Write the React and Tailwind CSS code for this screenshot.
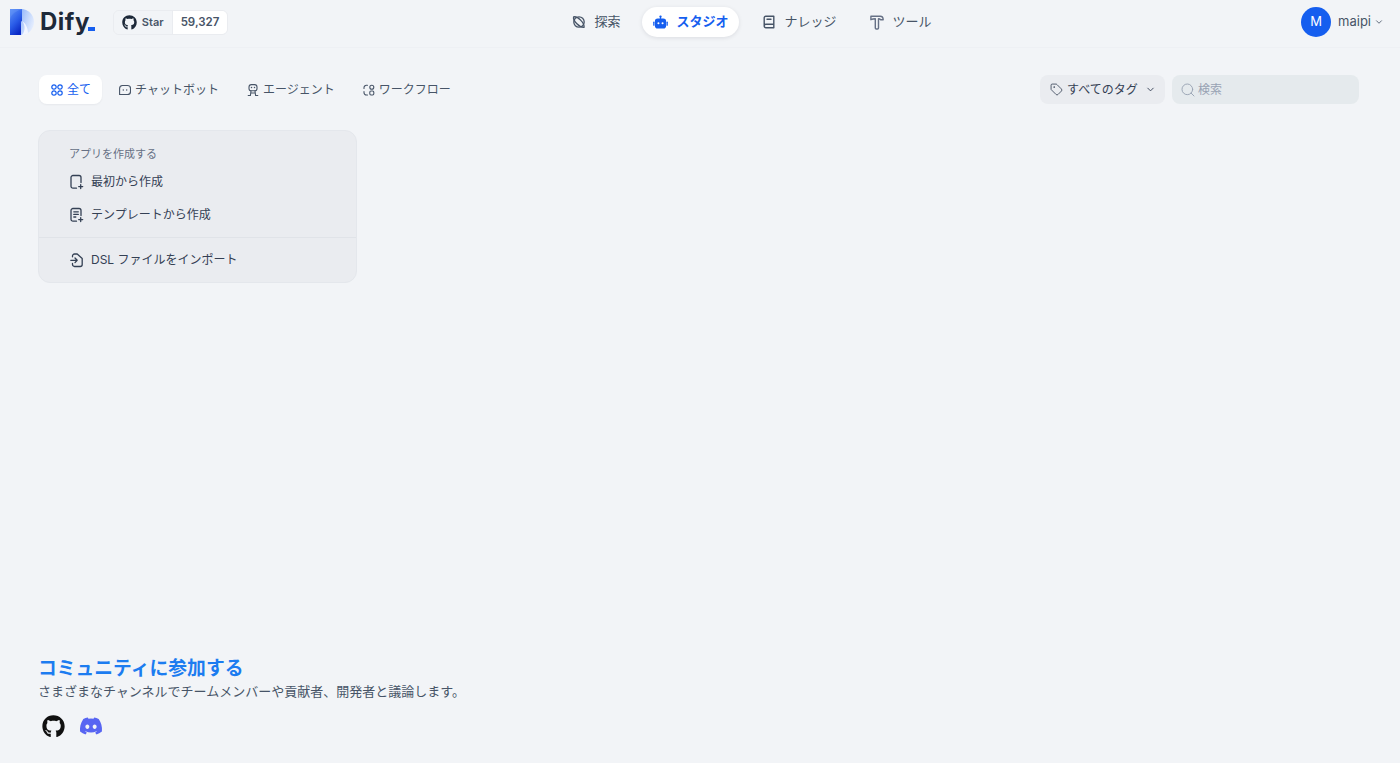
import React from "react";
import { FaGithub, FaDiscord } from "react-icons/fa";
import { ChevronDown, Search, Tag } from "lucide-react";

function Logo() {
  return (
    <svg width="24" height="26" viewBox="0 0 24 26" className="shrink-0">
      <defs>
        <linearGradient id="lgStem" x1="0.1" y1="0" x2="0.6" y2="1">
          <stop offset="0" stopColor="#5b8ff6" />
          <stop offset="0.55" stopColor="#2a5ce8" />
          <stop offset="1" stopColor="#0a28c4" />
        </linearGradient>
        <linearGradient id="lgBow" x1="0" y1="0" x2="1" y2="0.6">
          <stop offset="0" stopColor="#8fb3fa" />
          <stop offset="0.6" stopColor="#c6d9fc" />
          <stop offset="1" stopColor="#e6eefe" />
        </linearGradient>
      </defs>
      <path d="M11 0c7.2 0 13 5.8 13 13s-5.800 13-13 13h-1V0z" fill="url(#lgBow)" />
      <path d="M12 12c3.500 4 3.500 10 0 14c2 0 4.500-.6 6-2c0-5-2.500-10-6-12z" fill="#f3f6ff" />
      <path d="M0 0h12v12c-1 0-1 1-1 2v12H0z" fill="url(#lgStem)" />
      <path d="M0 0h14c-7 1-14 5-14 12z" fill="#6f9df8" opacity="0.35" />
    </svg>
  );
}

function ExploreIcon() {
  return (
    <svg width="14" height="14" viewBox="0 0 14 14" fill="none" stroke="#475467" strokeWidth="1.3" strokeLinecap="round" strokeLinejoin="round">
      <circle cx="7" cy="7" r="5.2" />
      <path d="M1.600 1.900c1.900-.5 5 1.200 7 3.200s3.700 5.400 3.500 7.200c-1.900.2-5.200-1.500-7.200-3.500s-3.800-5.100-3.300-6.900z" />
    </svg>
  );
}

function BookIcon() {
  return (
    <svg width="14" height="14" viewBox="0 0 14 14" fill="none" stroke="#475467" strokeWidth="1.4" strokeLinejoin="round">
      <path d="M2.200 11V2.800a1.500 1.500 0 0 1 1.500-1.500h8.100v11.400H3.900a1.700 1.700 0 0 1-1.700-1.700c0-.9.800-1.700 1.700-1.700h7.900" />
      <path d="M5 4.300h4" strokeLinecap="round" />
    </svg>
  );
}

function HammerIcon() {
  return (
    <svg width="14" height="15" viewBox="0 0 14 15" fill="none" stroke="#667085" strokeWidth="1.4" strokeLinejoin="round">
      <path d="M.9 1.200h9.300c1.800 0 3 1.400 3 3.600H10.700c-.7-.8-1.300-1.100-2.200-1.100v9.300a1 1 0 0 1-1 1H6.300a1 1 0 0 1-1-1V3.700c-1.800 0-3.200.4-4.400 1z" />
    </svg>
  );
}

function RobotIcon() {
  return (
    <svg width="15" height="15" viewBox="0 0 16 16" fill="#155eef" className="shrink-0">
      <rect x="7.300" y="1" width="1.400" height="3.200" />
      <circle cx="8" cy="1.700" r="1.200" />
      <rect x="2" y="3.800" width="12" height="10.700" rx="3" />
      <rect x="0.200" y="7" width="1.400" height="4.500" rx="0.700" />
      <rect x="14.400" y="7" width="1.400" height="4.500" rx="0.700" />
      <circle cx="5.800" cy="8.800" r="1.100" fill="#fff" />
      <circle cx="10.200" cy="8.800" r="1.100" fill="#fff" />
    </svg>
  );
}

function GridIcon() {
  return (
    <svg width="12" height="14" viewBox="0 0 12 14" fill="none" stroke="#155eef" strokeWidth="1.2" className="shrink-0">
      <circle cx="3" cy="4" r="2.200" />
      <circle cx="9" cy="4" r="2.200" />
      <circle cx="3" cy="10" r="2.200" />
      <circle cx="9" cy="10" r="2.200" />
    </svg>
  );
}

function ChatIcon() {
  return (
    <svg width="12" height="14" viewBox="0 0 12 14" fill="none" stroke="#475467" strokeWidth="1.1" className="shrink-0">
      <path d="M3.400 2.500h5.200a2.900 2.900 0 0 1 2.900 2.900v3.200a2.900 2.900 0 0 1-2.900 2.900H.6V5.400a2.900 2.900 0 0 1 2.800-2.900z" />
      <circle cx="4.300" cy="7" r="0.700" fill="#475467" stroke="none" />
      <circle cx="7.700" cy="7" r="0.700" fill="#475467" stroke="none" />
    </svg>
  );
}

function AgentIcon() {
  return (
    <svg width="12" height="14" viewBox="0 0 12 14" fill="none" stroke="#475467" strokeWidth="1.1" strokeLinecap="round" className="shrink-0">
      <rect x="2" y="1.600" width="8" height="6.200" rx="2.400" />
      <path d="M4.500 4.600h.01M7.500 4.600h.01" strokeWidth="1.500" />
      <path d="M4 8 3.400 12.500H1.200M8 8l.6 4.500h2.200M3.800 10h4.400" />
    </svg>
  );
}

function FlowIcon() {
  return (
    <svg width="12" height="14" viewBox="0 0 12 14" fill="none" stroke="#475467" strokeWidth="1.100" strokeLinecap="round" className="shrink-0">
      <circle cx="8.800" cy="4.300" r="2" />
      <rect x="6.800" y="8" width="4" height="4" rx="1.200" />
      <path d="M4.500 2.300H3.400A2.400 2.400 0 0 0 1 4.700v.8" />
      <path d="M1 8.500v1.100A2.400 2.400 0 0 0 3.400 12h1.100" />
    </svg>
  );
}

function NewFileIcon() {
  return (
    <svg width="14" height="16" viewBox="0 0 14 16" fill="none" stroke="#344054" strokeWidth="1.300" strokeLinecap="round" strokeLinejoin="round" className="shrink-0">
      <path d="M6.500 14.200H3A2 2 0 0 1 1 12.200V3.500a2 2 0 0 1 2-2h6a2 2 0 0 1 2 2v5" />
      <path d="M10.700 10.600v4M8.700 12.600h4" />
    </svg>
  );
}

function TemplateIcon() {
  return (
    <svg width="14" height="16" viewBox="0 0 14 16" fill="none" stroke="#344054" strokeWidth="1.300" strokeLinecap="round" strokeLinejoin="round" className="shrink-0">
      <path d="M6.500 14.200H3A2 2 0 0 1 1 12.200V3.500a2 2 0 0 1 2-2h6a2 2 0 0 1 2 2v5" />
      <path d="M3.800 4.800h4.500M3.800 7.400h4.500M3.800 10h2" />
      <path d="M10.700 10.600v4M8.700 12.600h4" />
    </svg>
  );
}

function ImportIcon() {
  return (
    <svg width="14" height="16" viewBox="0 0 14 16" fill="none" stroke="#344054" strokeWidth="1.300" strokeLinecap="round" strokeLinejoin="round" className="shrink-0">
      <path d="M2.500 4.800V4a2 2 0 0 1 2-2h2.700l5 4.400v6.100a2 2 0 0 1-2 2H4.500a2 2 0 0 1-2-2v-1" />
      <path d="M.8 8.300h6.400M5 6l2.200 2.300L5 10.600" />
    </svg>
  );
}

function NavItem({ icon, label, active }) {
  return (
    <div
      className={
        active
          ? "flex h-[30px] items-center gap-[8px] rounded-[15px] bg-white px-[11px] text-[13px] font-semibold text-[#155eef] shadow-[0_1px_4px_rgba(16,24,40,0.1)]"
          : "flex h-[30px] items-center gap-[8px] rounded-[15px] px-[11px] text-[13px] text-[#475467]"
      }
    >
      {icon}
      <span>{label}</span>
    </div>
  );
}

function Tab({ icon, label, active }) {
  return (
    <div
      className={
        active
          ? "flex h-[29px] items-center gap-[4px] rounded-lg bg-white pr-[11px] pl-[12px] text-[12px] text-[#155eef] shadow-[0_1px_2px_rgba(16,24,40,0.05)]"
          : "flex h-[29px] items-center gap-[4px] rounded-lg pr-[11px] pl-[12px] text-[12px] text-[#475467]"
      }
    >
      {icon}
      <span>{label}</span>
    </div>
  );
}

function CardRow({ icon, label }) {
  return (
    <div className="flex h-[33px] items-center gap-[7px] pl-[31px] text-[12px] text-[#344054]">
      {icon}
      <span>{label}</span>
    </div>
  );
}

export default function App() {
  return (
    <div
      className="flex h-[763px] flex-col overflow-hidden bg-[#f2f4f7]"
      style={{ fontFamily: '"Inter", "Noto Sans CJK JP", sans-serif' }}
    >
      <header className="flex h-[48px] shrink-0 items-center border-b border-[#eef0f4] pr-[16px] pb-[3px] pl-[10px]">
        <div className="flex items-center">
          <Logo />
          <span className="ml-[6px] text-[24px] leading-none font-bold tracking-[0.5px] text-[#1d2939]">Dify</span>
          <span className="mt-[14px] ml-[-2px] h-[4px] w-[7px] bg-[#155eef]" />
          <div className="ml-[18px] flex h-[25px] items-center overflow-hidden rounded-[6px] border border-[#eaecf0] text-[11px] leading-[23px] font-semibold">
            <div className="flex h-full items-center gap-[5px] bg-[#f2f4f7] px-[8px] text-[#475467]">
              <FaGithub size={15} className="text-[#1d2939]" />
              <span>Star</span>
            </div>
            <div className="flex h-full items-center border-l border-[#eaecf0] bg-white px-[8px] text-[11.5px] leading-[23px] text-[#475467]">59,327</div>
          </div>
        </div>
        <nav className="ml-[333px] flex items-center gap-[11px]">
          <NavItem icon={<ExploreIcon />} label="探索" />
          <NavItem icon={<RobotIcon />} label="スタジオ" active />
          <div className="ml-[1px]">
            <NavItem icon={<BookIcon />} label="ナレッジ" />
          </div>
          <div className="ml-[1px]">
            <NavItem icon={<HammerIcon />} label="ツール" />
          </div>
        </nav>
        <div className="ml-auto flex items-center">
          <div className="flex h-[30px] w-[30px] items-center justify-center rounded-full bg-[#155eef] text-[13px] text-white">M</div>
          <span className="ml-[7px] text-[13px] text-[#475467]">maipi</span>
          <ChevronDown size={10} className="ml-[3px] text-[#475467]" />
        </div>
      </header>

      <main className="flex flex-1 flex-col px-[38px]">
        <div className="mt-[27px] flex items-center justify-between pr-[3px] pl-[1px]">
          <div className="flex items-center gap-[5px]">
            <Tab icon={<GridIcon />} label="全て" active />
            <Tab icon={<ChatIcon />} label="チャットボット" />
            <Tab icon={<AgentIcon />} label="エージェント" />
            <Tab icon={<FlowIcon />} label="ワークフロー" />
          </div>
          <div className="flex items-center gap-[7px]">
            <div className="flex h-[29px] w-[125px] items-center gap-[4px] rounded-lg bg-[#eaecf0] pl-[10px] text-[12px] text-[#344054]">
              <Tag size={13} strokeWidth={1.5} />
              <span>すべてのタグ</span>
              <ChevronDown size={11} className="ml-[3px]" />
            </div>
            <div className="flex h-[29px] w-[187px] items-center gap-[2px] rounded-lg bg-[#e5eaed] pl-[8px] text-[12px] text-[#98a2b3]">
              <Search size={16} strokeWidth={1.4} />
              <span className="mt-[1px]">検索</span>
            </div>
          </div>
        </div>

        <div className="mt-[26px] h-[153px] w-[319px] rounded-xl border border-[#e4e7ec] bg-[#eaecf0]">
          <div className="pt-[15px] pl-[30px] text-[11px] leading-[16px] text-[#667085]">アプリを作成する</div>
          <div className="mt-[3px]">
            <CardRow icon={<NewFileIcon />} label="最初から作成" />
            <CardRow icon={<TemplateIcon />} label="テンプレートから作成" />
          </div>
          <div className="mt-[6px] border-t border-[#e0e3e8] pt-[5px]">
            <CardRow icon={<ImportIcon />} label="DSL ファイルをインポート" />
          </div>
        </div>

        <div className="mt-auto pb-[25px]">
          <div className="text-[18.8px] leading-[24px] font-semibold text-[#1c7cf0]">コミュニティに参加する</div>
          <div className="text-[13px] leading-[20px] text-[#475467]">さまざまなチャンネルでチームメンバーや貢献者、開発者と議論します。</div>
          <div className="mt-[13px] flex items-center gap-[14px] pl-[4px]">
            <FaGithub size={23} className="text-[#101010]" />
            <FaDiscord size={24} className="text-[#5865f2]" />
          </div>
        </div>
      </main>
    </div>
  );
}
